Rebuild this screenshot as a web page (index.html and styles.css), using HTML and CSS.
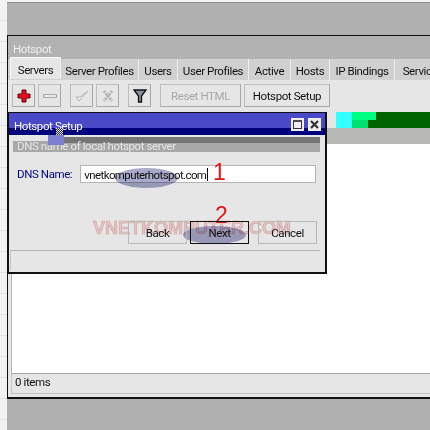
FILE: index.html
```html
<!DOCTYPE html>
<html>
<head>
    <link rel="stylesheet" href="styles.css">
</head>
<body>
    <div class="screen">
        <div class="desktop">
            <div class="window">
                <div class="window-title">Hotspot</div>
                <div class="tabs">
                    <span class="tab active">Servers</span>
                    <span class="tab w78">Server Profiles</span>
                    <span class="tab w39">Users</span>
                    <span class="tab w71">User Profiles</span>
                    <span class="tab w42">Active</span>
                    <span class="tab w39">Hosts</span>
                    <span class="tab w65">IP Bindings</span>
                    <span class="tab">Service</span>
                </div>
                <div class="toolbar">
                    <span class="tool">
                        <svg width="14" height="14" viewBox="0 0 14 14"><path d="M5 1h4v4h4v4H9v4H5V9H1V5h4z" fill="#e01020" stroke="#600" stroke-width="1"/></svg>
                    </span>
                    <span class="tool">
                        <svg width="14" height="14" viewBox="0 0 14 14"><rect x="0.5" y="5.500" width="13" height="3" fill="#e8e8e8" stroke="#aaa"/></svg>
                    </span>
                    <span class="tool gap-left">
                        <svg width="14" height="14" viewBox="0 0 14 14"><path d="M1 8l3 4 9-10-8 6z" fill="#eee" stroke="#b4b4b4"/></svg>
                    </span>
                    <span class="tool">
                        <svg width="14" height="14" viewBox="0 0 14 14"><path d="M3 2l8 10M11 2L3 12" stroke="#b4b4b4" stroke-width="3" stroke-dasharray="2 1"/></svg>
                    </span>
                    <span class="tool gap-left">
                        <svg width="14" height="14" viewBox="0 0 14 14"><path d="M1 1h12L8.500 7v6h-3V7z" fill="#8a9098" stroke="#111" stroke-width="1.300"/></svg>
                    </span>
                    <span class="tool wide disabled">Reset HTML</span>
                    <span class="tool wider">Hotspot Setup</span>
                </div>
                <div class="table-head">
                    <div class="glitch"><i class="g1"></i><i class="g2"></i><i class="g3"></i></div>
                </div>
                <div class="list"></div>
                <div class="status">0 items</div>
            </div>
        </div>

        <div class="dialog">
            <div class="dialog-title">
                <span>Hotspot Setup</span>
                <span class="win-btn"><svg width="11" height="11" viewBox="0 0 11 11"><rect x="1.500" y="2" width="8" height="7.500" fill="none" stroke="#333" stroke-width="1"/><path d="M1 2h9" stroke="#333" stroke-width="1.500"/></svg></span>
                <span class="win-btn"><svg width="11" height="11" viewBox="0 0 11 11"><path d="M2 2l7 7M9 2L2 9" stroke="#333" stroke-width="2.200"/></svg></span>
            </div>
            <div class="banner">DNS name of local hotspot server</div>
            <div class="field">
                <label class="field-label">DNS Name:</label>
                <div class="input">vnetkomputerhotspot.com<i class="caret"></i></div>
            </div>
            <div class="actions">
                <span class="btn">Back</span>
                <span class="btn default">Next</span>
                <span class="btn cancel">Cancel</span>
            </div>
            <div class="dialog-status"></div>
        </div>

        <div class="watermark">VNETKOMPUTER.COM</div>
        <div class="blob blob-a"></div>
        <div class="blob blob-b"></div>
        <div class="mark mark-a">1</div>
        <div class="mark mark-b">2</div>
        <div class="cursor"></div>
    </div>
</body>
</html>
```

FILE: styles.css
```css
* {
    box-sizing: border-box;
}
body {
    margin: 0;
    background: repeating-linear-gradient(#f2f2f2 0, #f2f2f2 20px, #e2e2e2 20px, #e2e2e2 21px);
    font-family: Roboto, "Liberation Sans", Arial, sans-serif;
    font-size: 11.5px;
    letter-spacing: -0.4px;
    color: #111;
}
.screen {
    position: relative;
    width: 430px;
    height: 430px;
    overflow: hidden;
}
.desktop {
    margin: 2px 0 0 7px;
    height: 428px;
    padding-top: 32px;
    background: #b0b0b0;
    border-top: 1px solid #8c8c8c;
}
.window {
    height: 364px;
    border: 1px solid #111;
    border-width: 1px 0 2px 1px;
    background: #e6e6e6;
    display: flex;
    flex-direction: column;
}
.window-title {
    height: 23px;
    padding: 6px 0 0 5px;
    background: #b2b2b2;
    color: #eee;
}
.tabs {
    height: 21px;
    display: flex;
    padding-left: 2px;
    background: #d0d0d0;
}
.tab {
    width: 51px;
    flex: none;
    padding-top: 5px;
    text-align: center;
    border-right: 1px solid #eee;
    white-space: nowrap;
}
.tab.active {
    height: 22px;
    margin-top: -2px;
    padding-top: 5px;
    background: #e6e6e6;
    border-top: 1px solid #fafafa;
    border-left: 1px solid #fafafa;
}
.w78 { width: 78px; }
.w39 { width: 39px; }
.w71 { width: 71px; }
.w42 { width: 42px; }
.w65 { width: 65px; }
.toolbar {
    height: 32px;
    display: flex;
    gap: 3px;
    align-items: flex-start;
    padding: 4px 0 0 4px;
}
.tool {
    width: 23px;
    height: 23px;
    flex: none;
    display: flex;
    align-items: center;
    justify-content: center;
    border: 1px solid #bdbdbd;
    border-right-color: #a8a8a8;
    border-bottom-color: #a8a8a8;
    background: #e6e6e6;
}
.gap-left { margin-left: 6px; }
.wide { width: 81px; margin-left: 6px; }
.wider { width: 86px; }
.disabled { color: #a8a8a8; }
.table-head {
    height: 32px;
    background: linear-gradient(#e6e6e6 0, #e6e6e6 16px, #b8b8b4 16px);
    padding-left: 328px;
}
.glitch {
    position: relative;
    height: 16px;
    background: #006400;
}
.glitch i {
    position: absolute;
    display: block;
}
.g1 { left: 0; top: 0; width: 16px; height: 16px; background: #33ffff; }
.g2 { left: 16px; top: 0; width: 24px; height: 8px; background: #00ff80; }
.g3 { left: 16px; top: 8px; width: 16px; height: 8px; background: #00e070; }
.list {
    flex: 1;
    margin-left: 3px;
    background: #fff;
    border-left: 1px solid #b4b4b4;
}
.status {
    height: 21px;
    margin: 0 0 3px 3px;
    padding: 1px 0 0 3px;
    border-top: 1px solid #a8a8a8;
    border-left: 1px solid #c4c4c4;
    border-bottom: 1px solid #c0c0c0;
}

.dialog {
    position: absolute;
    left: 8px;
    top: 112px;
    width: 319px;
    height: 162px;
    background: #e6e6e6;
    border: 2px solid #111;
    border-width: 1px 2px 2px 1px;
    display: flex;
    flex-direction: column;
}
.dialog-title {
    height: 22px;
    display: flex;
    align-items: flex-start;
    gap: 4px;
    padding: 6px 4px 0 5px;
    color: #fff;
    background: linear-gradient(#4a4ac8 0, #4a4ac8 15px, #00007c 15px);
}
.dialog-title span:first-child {
    margin-right: auto;
}
.win-btn {
    width: 13px;
    height: 13px;
    margin-top: -1px;
    display: flex;
    align-items: center;
    justify-content: center;
    background: #eee;
}
.banner {
    height: 15px;
    margin: 2px 5px 0 4px;
    padding: 2px 0 0 4px;
    color: #e6e6e6;
    background:
        linear-gradient(#757575, #757575) 51px 0 / 100% 6px no-repeat,
        linear-gradient(#e6e6e6, #e6e6e6) 0 0 / 100% 4px no-repeat,
        #a8a8a8;
}
.field {
    display: flex;
    align-items: center;
    gap: 8px;
    margin: 13px 9px 0 8px;
}
.field-label {
    color: #000080;
    white-space: nowrap;
}
.input {
    flex: 1;
    height: 18px;
    padding: 2px 0 0 3px;
    letter-spacing: -0.6px;
    background: #fff;
    border: 1px solid #b4b4b4;
}
.caret {
    display: inline-block;
    width: 1px;
    height: 13px;
    margin-left: 1px;
    vertical-align: -2px;
    background: #000;
}
.actions {
    display: flex;
    justify-content: flex-end;
    gap: 3px;
    margin: 38px 8px 0 0;
    position: relative;
    z-index: 2;
}
.btn {
    width: 59px;
    height: 23px;
    display: flex;
    align-items: center;
    justify-content: center;
    border: 1px solid #b8b8b8;
}
.btn.default {
    border-color: #111;
}
.btn.cancel {
    margin-left: 6px;
}
.dialog-status {
    height: 20px;
    margin: 6px 5px 0 1px;
    border-top: 1px solid #b4b4b4;
    border-left: 1px solid #c4c4c4;
}

.watermark {
    position: absolute;
    left: 93px;
    top: 218px;
    width: 200px;
    color: #f6dcdc;
    -webkit-text-stroke: 0.6px #eeb4b4;
    font-family: "Liberation Sans", Arial, sans-serif;
    font-size: 18px;
    font-weight: bold;
    letter-spacing: 0;
    white-space: nowrap;
    mix-blend-mode: multiply;
}
.blob {
    position: absolute;
    border-radius: 50%;
    background: rgba(84, 84, 150, 0.5);
    mix-blend-mode: multiply;
}
.blob-a {
    left: 115px;
    top: 168px;
    width: 63px;
    height: 20px;
}
.blob-b {
    left: 183px;
    top: 226px;
    width: 63px;
    height: 18px;
}
.mark {
    position: absolute;
    color: #e01818;
    font-family: "Liberation Sans", Arial, sans-serif;
    font-size: 23px;
    line-height: 24px;
    letter-spacing: 0;
}
.mark-a { left: 213px; top: 160px; }
.mark-b { left: 215px; top: 203px; }
.cursor {
    position: absolute;
    left: 48px;
    top: 135px;
    width: 16px;
    height: 10px;
    background: #7f7fd0;
}
.cursor::before {
    content: "";
    position: absolute;
    left: 8px;
    top: -7px;
    width: 7px;
    height: 7px;
    background: repeating-conic-gradient(#333 0 25%, #ddd 0 50%) 0 0 / 2px 2px;
}
```
